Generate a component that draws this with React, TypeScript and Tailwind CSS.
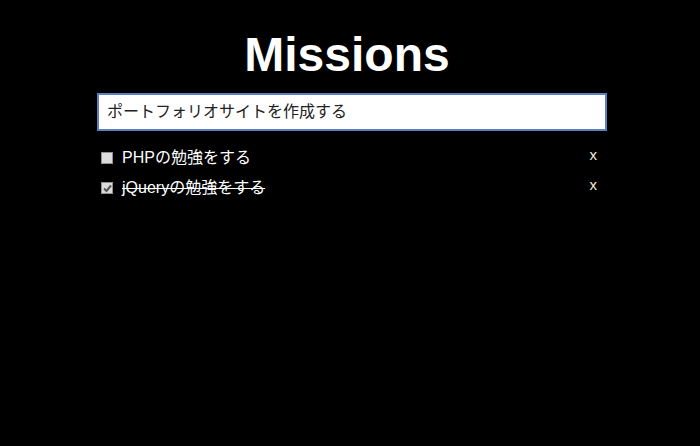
const missions = [
  { title: 'PHPの勉強をする', done: false },
  { title: 'jQueryの勉強をする', done: true },
]

const Box = ({ checked }: { checked: boolean }) => {
  return (
    <span className="flex h-[12px] w-[12px] items-center justify-center border border-[#8f8f8f] bg-[#dcdcdc]">
      {checked && (
        <svg width="9" height="9" viewBox="0 0 9 9">
          <path d="M1 4.5 L3.5 7 L8 1.5" stroke="#555" strokeWidth="2" fill="none" />
        </svg>
      )}
    </span>
  )
}

const App = () => {
  return (
    <div
      className="h-[446px] w-[700px] bg-black text-white"
      style={{ fontFamily: '"Liberation Sans", "Noto Sans CJK JP", sans-serif' }}
    >
      <div className="mx-auto w-[514px] pl-[4px]">
        <h1 className="pt-[25px] pr-[10px] text-center text-[48px] font-bold leading-[60px]">
          Missions
        </h1>
        <div className="mt-[8px] flex h-[38px] items-center border-2 border-[#5b7fc0] bg-white px-[8px] text-[16px] text-[#222]">
          ポートフォリオサイトを作成する
        </div>
        <ul className="mt-[17px] flex flex-col gap-[10px] pl-[4px] pr-[10px]">
          {missions.map((m) => (
            <li key={m.title} className="flex h-[20px] items-center text-[16px]">
              <Box checked={m.done} />
              <span className={`ml-[9px] flex-1 ${m.done ? 'line-through' : ''}`}>
                {m.title}
              </span>
              <span className="-mt-[5px] text-[15px] text-[#f3ecdc]">x</span>
            </li>
          ))}
        </ul>
      </div>
    </div>
  )
}

export default App
